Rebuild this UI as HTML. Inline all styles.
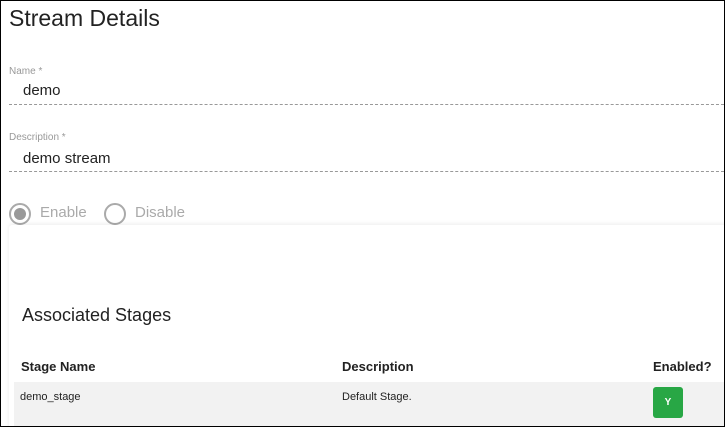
<!DOCTYPE html>
<html><head><style>
body{margin:0;width:725px;height:427px;overflow:hidden;background:#fff;font-family:"Liberation Sans",Arial,sans-serif;}
#f{position:absolute;left:0;top:0;width:723px;height:425px;border:1px solid #000;overflow:hidden;}
.a{position:absolute;white-space:nowrap;}
.dash{position:absolute;left:8px;width:720px;border-top:1px dashed #999;}
</style></head><body><div id="f">
<div class="a" style="left:8px;top:4px;font-size:23px;color:#222;">Stream Details</div>
<div class="a" style="left:8px;top:65px;font-size:10px;color:#999;">Name *</div>
<div class="a" style="left:22px;top:81px;font-size:15px;color:#222;">demo</div>
<div class="dash" style="top:103px"></div>
<div class="a" style="left:8px;top:131px;font-size:10px;color:#999;">Description *</div>
<div class="a" style="left:22px;top:149px;font-size:15px;color:#222;">demo stream</div>
<div class="dash" style="top:170px"></div>
<div class="a" style="left:8px;top:202px;width:22px;height:22px;border:2px solid #aaa;border-radius:50%;box-sizing:border-box;"></div>
<div class="a" style="left:13px;top:207px;width:12px;height:12px;background:#999;border-radius:50%;"></div>
<div class="a" style="left:39px;top:203px;font-size:15px;color:#aaa;">Enable</div>
<div class="a" style="left:103px;top:202px;width:22px;height:22px;border:2px solid #aaa;border-radius:50%;box-sizing:border-box;"></div>
<div class="a" style="left:134px;top:203px;font-size:15px;color:#aaa;">Disable</div>
<div class="a" style="left:8px;top:224px;width:720px;height:210px;background:#fff;border-radius:3px;box-shadow:0 -1px 4px rgba(0,0,0,0.08);"></div>
<div class="a" style="left:21px;top:304px;font-size:18px;color:#222;">Associated Stages</div>
<div class="a" style="left:20px;top:358px;font-size:13px;font-weight:bold;color:#222;">Stage Name</div>
<div class="a" style="left:341px;top:358px;font-size:13px;font-weight:bold;color:#222;">Description</div>
<div class="a" style="left:652px;top:358px;font-size:13px;font-weight:bold;color:#222;">Enabled?</div>
<div class="a" style="left:13px;top:381px;width:715px;height:50px;background:#f2f2f2;"></div>
<div class="a" style="left:19px;top:390px;font-size:11px;color:#222;">demo_stage</div>
<div class="a" style="left:341px;top:390px;font-size:11px;color:#222;">Default Stage.</div>
<div class="a" style="left:652px;top:386px;width:30px;height:31px;background:#28a745;border-radius:3px;color:#fff;font-size:10px;font-weight:bold;text-align:center;line-height:31px;">Y</div>
</div></body></html>
